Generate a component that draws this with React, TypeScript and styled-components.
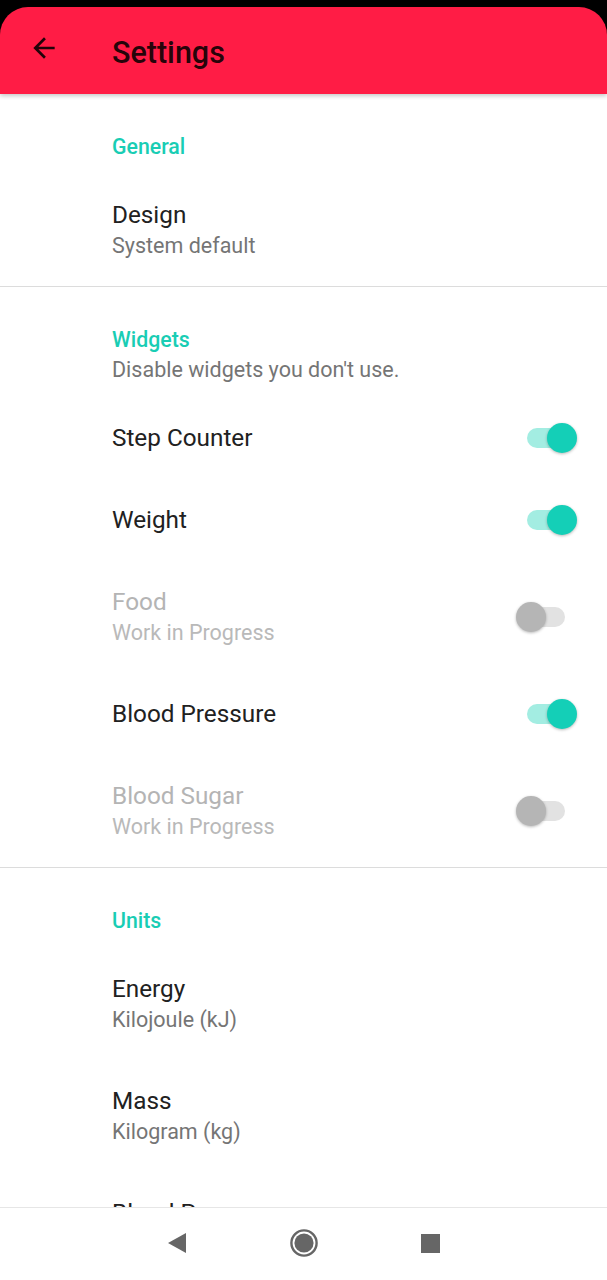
import React from "react";
import styled, { createGlobalStyle } from "styled-components";

const GlobalStyle = createGlobalStyle`
  html, body { margin: 0; padding: 0; background: #000; }
  body { font-family: Roboto, "Noto Sans", Arial, sans-serif; -webkit-font-smoothing: antialiased; }
  * { box-sizing: border-box; }
`;

const Screen = styled.div`
  width: 607px;
  height: 1280px;
  display: flex;
  flex-direction: column;
  background: #000;
  overflow: hidden;
`;

const StatusBar = styled.div`
  height: 7px;
  flex: none;
  background: #000;
`;

const AppBar = styled.header`
  position: relative;
  z-index: 2;
  flex: none;
  height: 87px;
  display: flex;
  align-items: center;
  background: #ff1c45;
  border-radius: 28px 28px 0 0;
  box-shadow: 0 2px 4px rgba(0, 0, 0, 0.22);
`;

const BackButton = styled.button`
  width: 88px;
  height: 100%;
  flex: none;
  display: flex;
  align-items: center;
  justify-content: center;
  padding: 0 0 6px 0;
  margin: 0;
  border: none;
  background: none;
  color: rgba(0, 0, 0, 0.87);
`;

const Title = styled.h1`
  margin: 4px 0 0 24px;
  font-size: 30.5px;
  line-height: 36px;
  font-weight: 500;
  color: rgba(0, 0, 0, 0.87);
`;

const Content = styled.main`
  flex: 1;
  min-height: 0;
  overflow: hidden;
  background: #fff;
`;

const Section = styled.section<{ $divider?: boolean }>`
  border-bottom: ${(p) => (p.$divider ? "1px solid #dcdcdc" : "none")};
`;

const CategoryHeader = styled.div`
  padding: 40px 29px 14px 112px;
  display: flex;
  flex-direction: column;
  gap: 4px;
`;

const CategoryTitle = styled.div`
  font-size: 21.3px;
  line-height: 26px;
  font-weight: 500;
  color: #19cdb4;
`;

const CategorySummary = styled.div`
  font-size: 21.5px;
  line-height: 26px;
  color: #757575;
`;

const Row = styled.div`
  display: flex;
  align-items: center;
  justify-content: space-between;
  padding: 27px 29px 27px 112px;
`;

const RowText = styled.div`
  display: flex;
  flex-direction: column;
  gap: 4px;
`;

const RowTitle = styled.div<{ $disabled?: boolean }>`
  font-size: 24.3px;
  line-height: 28px;
  color: ${(p) => (p.$disabled ? "#b4b4b4" : "#212121")};
`;

const RowSummary = styled.div<{ $disabled?: boolean }>`
  font-size: 21.5px;
  line-height: 26px;
  color: ${(p) => (p.$disabled ? "#b9b9b9" : "#757575")};
`;

const SwitchBox = styled.div`
  position: relative;
  width: 62px;
  height: 30px;
  margin: -1px 0;
  flex: none;
`;

const Track = styled.div<{ $on: boolean }>`
  position: absolute;
  left: 11px;
  top: 5px;
  width: 38px;
  height: 20px;
  border-radius: 10px;
  background: ${(p) => (p.$on ? "#a3ede2" : "#e2e2e2")};
`;

const Thumb = styled.div<{ $on: boolean }>`
  position: absolute;
  top: 0;
  left: ${(p) => (p.$on ? "31px" : "0")};
  width: 30px;
  height: 30px;
  border-radius: 50%;
  background: ${(p) => (p.$on ? "#14cfb7" : "#b5b5b5")};
  box-shadow: 0 1px 3px rgba(0, 0, 0, 0.28);
`;

const NavBar = styled.nav`
  flex: none;
  height: 73px;
  background: #fff;
  border-top: 1px solid #e6e6e6;
  display: flex;
  align-items: center;
  justify-content: center;
  padding-bottom: 2px;
`;

const NavButton = styled.div`
  width: 127px;
  display: flex;
  justify-content: center;
  align-items: center;
`;

const Switch = ({ on }: { on: boolean }) => (
  <SwitchBox>
    <Track $on={on} />
    <Thumb $on={on} />
  </SwitchBox>
);

type Pref = { title: string; summary?: string; toggle?: boolean; disabled?: boolean };

const PrefRow = ({ title, summary, toggle, disabled }: Pref) => (
  <Row>
    <RowText>
      <RowTitle $disabled={disabled}>{title}</RowTitle>
      {summary && <RowSummary $disabled={disabled}>{summary}</RowSummary>}
    </RowText>
    {toggle !== undefined && <Switch on={toggle} />}
  </Row>
);

export default function App() {
  return (
    <>
      <GlobalStyle />
      <Screen>
        <StatusBar />
        <AppBar>
          <BackButton aria-label="Back">
            <svg width="32" height="32" viewBox="0 0 24 24" fill="currentColor">
              <path d="M20 11H7.83l5.59-5.59L12 4l-8 8 8 8 1.41-1.41L7.83 13H20v-2z" />
            </svg>
          </BackButton>
          <Title>Settings</Title>
        </AppBar>
        <Content>
          <Section $divider>
            <CategoryHeader>
              <CategoryTitle>General</CategoryTitle>
            </CategoryHeader>
            <PrefRow title="Design" summary="System default" />
          </Section>
          <Section $divider>
            <CategoryHeader>
              <CategoryTitle>Widgets</CategoryTitle>
              <CategorySummary>Disable widgets you don't use.</CategorySummary>
            </CategoryHeader>
            <PrefRow title="Step Counter" toggle={true} />
            <PrefRow title="Weight" toggle={true} />
            <PrefRow title="Food" summary="Work in Progress" toggle={false} disabled />
            <PrefRow title="Blood Pressure" toggle={true} />
            <PrefRow title="Blood Sugar" summary="Work in Progress" toggle={false} disabled />
          </Section>
          <Section>
            <CategoryHeader>
              <CategoryTitle>Units</CategoryTitle>
            </CategoryHeader>
            <PrefRow title="Energy" summary="Kilojoule (kJ)" />
            <PrefRow title="Mass" summary="Kilogram (kg)" />
            <PrefRow title="Blood Pressure" summary="Millimetre of mercury (mmHg)" />
          </Section>
        </Content>
        <NavBar>
          <NavButton>
            <svg width="20" height="22" viewBox="0 0 20 22">
              <path d="M19 1 L19 21 L1 11 Z" fill="#666" />
            </svg>
          </NavButton>
          <NavButton>
            <svg width="28" height="28" viewBox="0 0 28 28">
              <circle cx="14" cy="14" r="12.6" fill="none" stroke="#666" strokeWidth="2.4" />
              <circle cx="14" cy="14" r="9.6" fill="#666" />
            </svg>
          </NavButton>
          <NavButton>
            <svg width="19" height="19" viewBox="0 0 19 19">
              <rect x="0" y="0" width="19" height="19" fill="#666" />
            </svg>
          </NavButton>
        </NavBar>
      </Screen>
    </>
  );
}
